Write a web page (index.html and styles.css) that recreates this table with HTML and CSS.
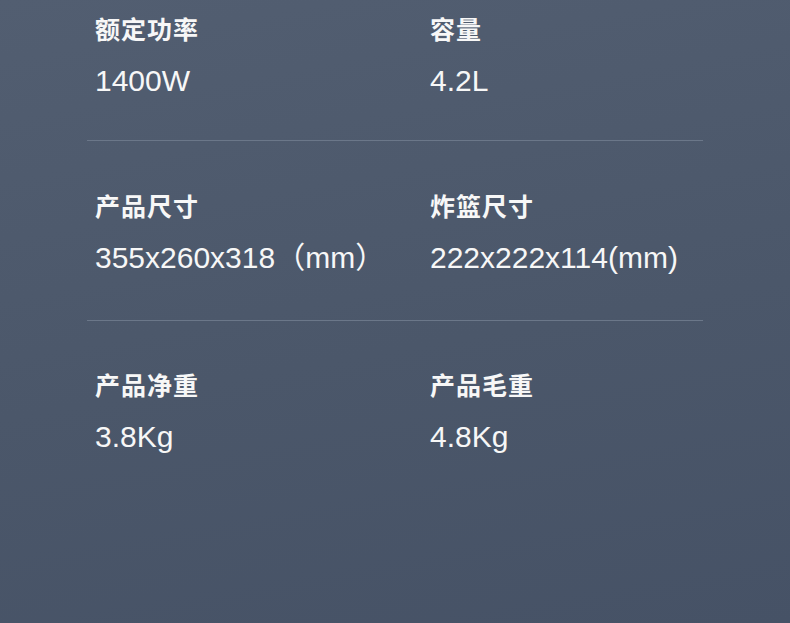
FILE: index.html
```html
<!DOCTYPE html>
<html lang="zh-CN">
<head>
  <meta charset="UTF-8">
  <meta name="viewport" content="width=device-width, initial-scale=1.0">
  <title>产品参数</title>
  <link rel="stylesheet" href="styles.css">
</head>
<body>

<section class="specs">
  <div class="spec-row">
    <div class="spec">
      <div class="spec-label">额定功率</div>
      <div class="spec-value">1400W</div>
    </div>
    <div class="spec">
      <div class="spec-label">容量</div>
      <div class="spec-value">4.2L</div>
    </div>
  </div>

  <div class="spec-row">
    <div class="spec">
      <div class="spec-label">产品尺寸</div>
      <div class="spec-value">355x260x318（mm）</div>
    </div>
    <div class="spec">
      <div class="spec-label">炸篮尺寸</div>
      <div class="spec-value">222x222x114(mm)</div>
    </div>
  </div>

  <div class="spec-row last">
    <div class="spec">
      <div class="spec-label">产品净重</div>
      <div class="spec-value">3.8Kg</div>
    </div>
    <div class="spec">
      <div class="spec-label">产品毛重</div>
      <div class="spec-value">4.8Kg</div>
    </div>
  </div>
</section>

</body>
</html>
```

FILE: styles.css
```css
html,
body {
  height: 100%;
}

body {
  margin: 0;
  padding: 0;
  background: linear-gradient(170deg, #525e71 0%, #4b576a 55%, #465266 100%);
  color: #f7f7f7;
  font-family: "Liberation Sans", Arial, "Noto Sans CJK SC", sans-serif;
  overflow: hidden;
}

/* Spec table */
.specs {
  width: 616px;
  margin-left: 87px;
}

.spec-row {
  display: grid;
  grid-template-columns: 335px 1fr;
  padding: 49px 0 45px 8px;
  border-bottom: 1px solid #6b7789;
}

.spec-row:first-child {
  padding-top: 13px;
  padding-bottom: 42px;
}

.spec-row.last {
  padding-top: 48px;
  border-bottom: none;
}

.spec-label {
  font-family: "Noto Sans CJK SC", sans-serif;
  font-size: 25px;
  font-weight: 700;
  line-height: 30px;
  letter-spacing: 1px;
}

.spec-value {
  margin-top: 21px;
  font-size: 30px;
  line-height: 34px;
}
```
